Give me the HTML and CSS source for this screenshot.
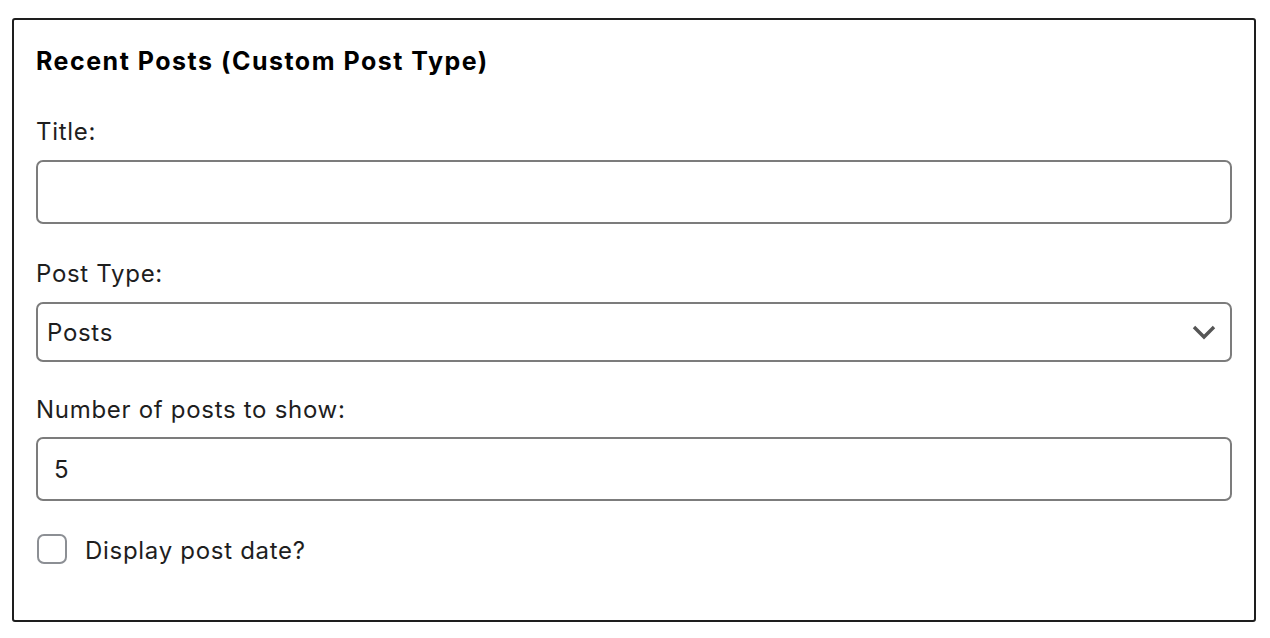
FILE: index.html
```html
<!DOCTYPE html>
<html>
  <head>
    <title>
      Recent Posts widget
    </title>

    <link rel="stylesheet" href="styles.css">
  </head>
  <body>
    <div class="widget">
      <h3 class="widgettitle">Recent Posts (Custom Post Type)</h3>

      <p class="field titlefield">
        <label for="title">Title:</label>
        <input class="textinput" id="title" type="text" value="">
      </p>

      <p class="field typefield">
        <label for="posttype">Post Type:</label>
        <span class="selectwrapper">
          <select class="selectinput" id="posttype">
            <option>Posts</option>
            <option>Pages</option>
          </select>
          <svg class="chevron" width="24" height="16" viewBox="0 0 24 16">
            <path d="M2 3 L12 13 L22 3" fill="none" stroke="#555" stroke-width="3.4"/>
          </svg>
        </span>
      </p>

      <p class="field numberfield">
        <label for="number">Number of posts to show:</label>
        <input class="textinput numberinput" id="number" type="number" value="5">
      </p>

      <p class="checkfield">
        <input class="checkbox" id="showdate" type="checkbox">
        <label class="checklabel" for="showdate">Display post date?</label>
      </p>
    </div>
  </body>
</html>
```

FILE: styles.css
```css
body {
  margin: 0;
  font-family: Inter, "Liberation Sans", sans-serif;
  color: #1e1e1e;
}
.widget {
  margin: 18px 0 0 12px;
  width: 1244px;
  box-sizing: border-box;
  border: 2px solid #1e1e1e;
  border-radius: 3px;
  padding: 23px 22px 56px 22px;
}
.widgettitle {
  margin: 0 0 35px 0;
  font-size: 25px;
  font-weight: 700;
  line-height: 36px;
  letter-spacing: 1.5px;
  color: #000;
}
.field {
  margin: 0;
  display: flex;
  flex-direction: column;
  gap: 10px;
  font-size: 24px;
  line-height: 36px;
  letter-spacing: 0.7px;
}
.titlefield {
  margin-bottom: 32px;
}
.typefield {
  margin-bottom: 30px;
}
.numberfield {
  gap: 9px;
  margin-bottom: 33px;
}
.textinput,
.selectinput {
  display: block;
  width: 100%;
  height: 64px;
  box-sizing: border-box;
  margin: 0;
  border: 2px solid #7c7c7c;
  border-radius: 7px;
  background: #fff;
  font-family: inherit;
  font-size: 24px;
  letter-spacing: 0.7px;
  color: #1e1e1e;
  padding: 0 16px;
}
.textinput:focus,
.selectinput:focus {
  outline: none;
}
.numberinput {
  -moz-appearance: textfield;
}
.numberinput::-webkit-inner-spin-button,
.numberinput::-webkit-outer-spin-button {
  -webkit-appearance: none;
  margin: 0;
}
.selectwrapper {
  position: relative;
  display: block;
}
.selectinput {
  height: 60px;
  padding: 0 50px 0 9px;
  appearance: none;
  -webkit-appearance: none;
}
.chevron {
  position: absolute;
  right: 16px;
  top: 22px;
  pointer-events: none;
}
.checkfield {
  margin: 0;
  display: flex;
  align-items: center;
  gap: 18px;
  height: 30px;
  font-size: 24px;
  line-height: 30px;
  letter-spacing: 0.7px;
}
.checklabel {
  padding-top: 3px;
}
.checkbox {
  appearance: none;
  -webkit-appearance: none;
  margin: 0 0 0 1px;
  width: 30px;
  height: 30px;
  border: 2px solid #8c8f94;
  border-radius: 7px;
  background: #fff;
}
```
